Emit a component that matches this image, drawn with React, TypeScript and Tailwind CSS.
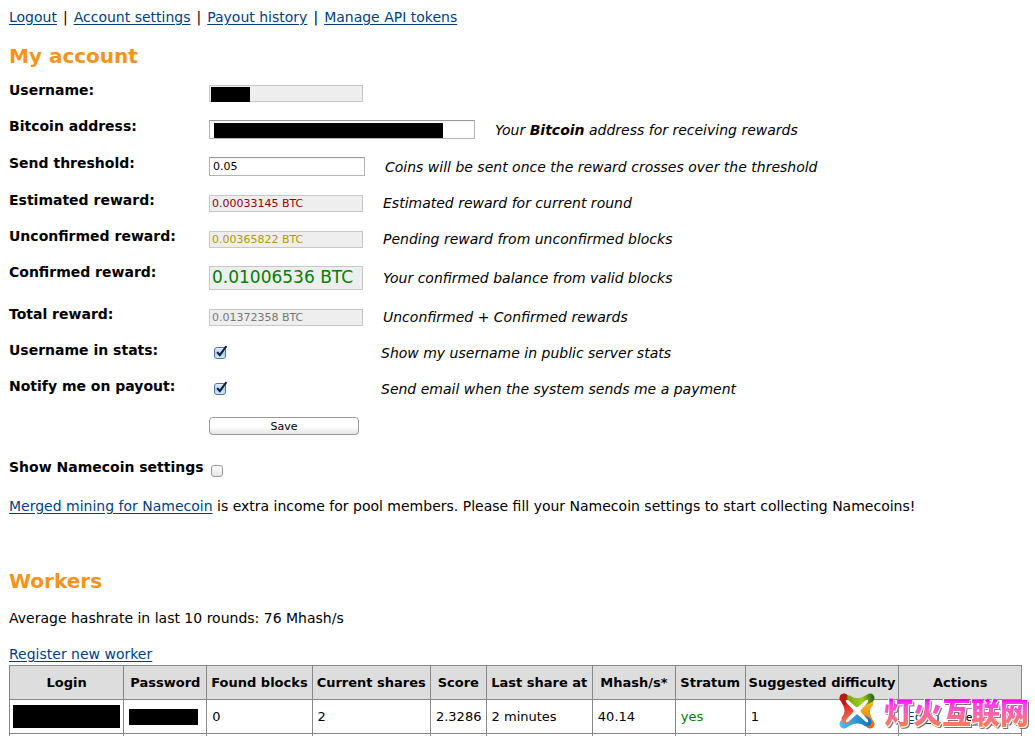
import type { ReactNode } from "react"

const linkClass = "text-[#003f7f] underline underline-offset-2"

const navLinks = ["Logout", "Account settings", "Payout history", "Manage API tokens"]

interface RowProps {
  id: string
  label: string
  note: ReactNode
  children: ReactNode
}

function Row({ id, label, note, children }: RowProps) {
  return (
    <div className="flex">
      <label htmlFor={id} className="w-50 shrink-0 font-bold leading-[18px]">
        {label}
      </label>
      <div className="flex min-h-9 items-center gap-5 pt-[3px] pb-[15px]">
        {children}
        <p className="whitespace-nowrap italic leading-[18px]">{note}</p>
      </div>
    </div>
  )
}

function ReadOnlyField({ id, value, className }: { id: string; value: string; className: string }) {
  return (
    <input
      id={id}
      readOnly
      value={value}
      className={`w-[154px] border border-[#c8c8c8] bg-[#eeeeee] px-[2px] ${className}`}
    />
  )
}

function Tick({ id }: { id: string }) {
  return (
    <span className="relative flex w-[152px] pl-[5px]">
      <input
        id={id}
        type="checkbox"
        defaultChecked
        className="peer h-3 w-3 appearance-none rounded-[3px] border border-[#5a6ea8] bg-linear-to-b from-[#e4f1fc] via-[#a8cff4] to-[#c8f0ff]"
      />
      <svg
        viewBox="0 0 14 14"
        className="pointer-events-none absolute -top-[2px] left-[5px] hidden h-[14px] w-[14px] peer-checked:block"
      >
        <path d="M3.2 7.2 L5.8 10.2 L12.4 1.2" fill="none" stroke="#101a35" strokeWidth="2" />
      </svg>
    </span>
  )
}

const columns = [
  { title: "Login", width: "w-[11.3%]" },
  { title: "Password", width: "w-[8.2%]" },
  { title: "Found blocks", width: "w-[10.4%]" },
  { title: "Current shares", width: "w-[11.7%]" },
  { title: "Score", width: "w-[5.5%]" },
  { title: "Last share at", width: "w-[10.5%]" },
  { title: "Mhash/s*", width: "w-[8.2%]" },
  { title: "Stratum", width: "w-[6.9%]" },
  { title: "Suggested difficulty", width: "w-[15.2%]" },
  { title: "Actions", width: "w-[12.1%]" },
]

const cell = "border border-[#888888]"

function WorkersTable() {
  return (
    <table className="w-full table-fixed border-collapse whitespace-nowrap text-[13px]">
      <thead>
        <tr className="h-[34px] bg-[#dddddd]">
          {columns.map((column) => (
            <th key={column.title} className={`${cell} ${column.width}`}>
              <span className="flex justify-center">{column.title}</span>
            </th>
          ))}
        </tr>
      </thead>
      <tbody>
        <tr className="h-[34px]">
          <td className={`${cell} px-[3px]`}>
            <div className="h-[23px] bg-black" />
          </td>
          <td className={`${cell} px-[5px]`}>
            <div className="mr-[3px] h-4 bg-black" />
          </td>
          <td className={`${cell} px-[5px]`}>0</td>
          <td className={`${cell} px-[5px]`}>2</td>
          <td className={`${cell} px-[5px]`}>2.3286</td>
          <td className={`${cell} px-[5px]`}>2 minutes</td>
          <td className={`${cell} px-[5px]`}>40.14</td>
          <td className={`${cell} px-[5px] text-[#008000]`}>yes</td>
          <td className={`${cell} px-[5px]`}>1</td>
          <td className={`${cell} px-[7px]`}>
            <a href="#edit" className={linkClass}>Edit</a> |{" "}
            <button className="ml-1 h-[18px] rounded-[4px] border border-[#999999] bg-linear-to-b from-white to-[#e8e8e8] px-2 align-middle text-[11px] leading-none">
              Delete
            </button>
          </td>
        </tr>
        <tr className="h-[34px]">
          {columns.map((column) => (
            <td key={column.title} className={cell} />
          ))}
        </tr>
      </tbody>
    </table>
  )
}

function Watermark() {
  return (
    <div className="pointer-events-none absolute right-[6px] bottom-[7px] flex items-center gap-[9px]">
      <svg viewBox="0 0 36 36" className="h-9 w-9" fill="none" strokeLinecap="round">
        <defs>
          <linearGradient id="red" gradientUnits="userSpaceOnUse" x1="4" y1="2" x2="10" y2="26">
            <stop offset="0" stopColor="#9c0a0c" />
            <stop offset="0.4" stopColor="#e0201c" />
            <stop offset="1" stopColor="#f2704c" />
          </linearGradient>
          <linearGradient id="green" gradientUnits="userSpaceOnUse" x1="6" y1="8" x2="34" y2="5">
            <stop offset="0" stopColor="#6fa018" />
            <stop offset="0.6" stopColor="#a2cc20" />
            <stop offset="1" stopColor="#2f6e12" />
          </linearGradient>
          <linearGradient id="orange" gradientUnits="userSpaceOnUse" x1="28" y1="8" x2="32" y2="34">
            <stop offset="0" stopColor="#f0c428" />
            <stop offset="1" stopColor="#ee6208" />
          </linearGradient>
          <linearGradient id="blue" gradientUnits="userSpaceOnUse" x1="2" y1="30" x2="30" y2="30">
            <stop offset="0" stopColor="#55bcec" />
            <stop offset="1" stopColor="#1474bd" />
          </linearGradient>
        </defs>
        <path d="M31 31 Q22 18 30 10" stroke="url(#orange)" strokeWidth="9" />
        <path d="M5 31 Q18 22 28 29" stroke="url(#blue)" strokeWidth="9" />
        <path d="M5 5 Q14 18 7 26" stroke="url(#red)" strokeWidth="9" />
        <path d="M10 7 Q18 13 31 5" stroke="url(#green)" strokeWidth="9" />
        <path d="M1 6 Q1 1 5 1 Q7 1 8 3 L9 10 L5 12 Z" fill="#c01614" />
        <path d="M7 9 Q6 6 9 7 L18 15 L27 7 Q30 6 29 9 L21 18 L29 27 Q30 30 27 29 L18 21 L9 29 Q6 30 7 27 L15 18 Z" fill="white" />
      </svg>
      <span className="bg-linear-to-b from-[#ff00ff] from-20% to-[#ff7a50] to-90% bg-clip-text font-['Noto_Sans_CJK_SC',sans-serif] text-[29px] leading-9 font-black text-transparent [filter:drop-shadow(1px_1px_0_white)_drop-shadow(-1px_0_0_white)_drop-shadow(1px_1px_0_#777777)]">
        灯火互联网
      </span>
    </div>
  )
}

export default function App() {
  return (
    <div className="relative h-screen overflow-hidden bg-white pr-[13px] pl-[9px] font-['DejaVu_Sans',sans-serif] text-[14px] text-black">
      <nav className="flex gap-[6px] pt-2 leading-[18px]">
        {navLinks.map((text, index) => (
          <span key={text} className="flex gap-[6px]">
            {index > 0 && <span>|</span>}
            <a href="#nav" className={linkClass}>{text}</a>
          </span>
        ))}
      </nav>

      <h1 className="mt-4 text-[20px] leading-7 font-bold text-[#f7931a]">My account</h1>

      <form className="mt-[11px]" onSubmit={(event) => event.preventDefault()}>
        <Row id="username" label="Username:" note="">
          <span className="relative flex">
            <ReadOnlyField id="username" value="" className="h-[17px]" />
            <span className="absolute top-[2px] left-[2px] h-[15px] w-[39px] bg-black" />
          </span>
        </Row>
        <Row
          id="address"
          label="Bitcoin address:"
          note={<>Your <b>Bitcoin</b> address for receiving rewards</>}
        >
          <span className="relative flex">
            <input id="address" className="h-[19px] w-[266px] border border-[#b4b4b4] border-t-[#999999] px-[3px] text-[11px] inset-shadow-xs" />
            <span className="absolute top-[3px] left-[5px] h-[15px] w-[229px] bg-black" />
          </span>
        </Row>
        <Row id="threshold" label="Send threshold:" note="Coins will be sent once the reward crosses over the threshold">
          <input
            id="threshold"
            defaultValue="0.05"
            className="h-[19px] w-[156px] border border-[#b4b4b4] border-t-[#999999] px-[3px] text-[11px] inset-shadow-xs"
          />
        </Row>
        <Row id="estimated" label="Estimated reward:" note="Estimated reward for current round">
          <ReadOnlyField id="estimated" value="0.00033145 BTC" className="h-[17px] text-[11px] text-[#990000]" />
        </Row>
        <Row id="unconfirmed" label="Unconfirmed reward:" note="Pending reward from unconfirmed blocks">
          <ReadOnlyField id="unconfirmed" value="0.00365822 BTC" className="h-[17px] text-[11px] text-[#b09a00]" />
        </Row>
        <Row id="confirmed" label="Confirmed reward:" note="Your confirmed balance from valid blocks">
          <ReadOnlyField id="confirmed" value="0.01006536 BTC" className="h-6 text-[17px] text-[#008000]" />
        </Row>
        <Row id="total" label="Total reward:" note="Unconfirmed + Confirmed rewards">
          <ReadOnlyField id="total" value="0.01372358 BTC" className="h-[17px] text-[11px] text-[#777777]" />
        </Row>
        <Row id="stats" label="Username in stats:" note="Show my username in public server stats">
          <Tick id="stats" />
        </Row>
        <Row id="notify" label="Notify me on payout:" note="Send email when the system sends me a payment">
          <Tick id="notify" />
        </Row>
        <div className="pt-1 pl-50">
          <button className="block h-[18px] w-[150px] rounded-[4px] border border-[#999999] bg-linear-to-b from-white from-50% to-[#e6e6e6] text-[11px] leading-none">
            Save
          </button>
        </div>
        <div className="mt-[23px] flex gap-[7px]">
          <label htmlFor="namecoin" className="font-bold leading-[18px]">Show Namecoin settings</label>
          <input
            id="namecoin"
            type="checkbox"
            className="mt-[7px] h-3 w-3 appearance-none rounded-[3px] border border-[#999999] bg-linear-to-b from-white to-[#e6e6e6]"
          />
        </div>
      </form>

      <p className="mt-5 leading-[18px]">
        <a href="#namecoin-info" className={linkClass}>Merged mining for Namecoin</a> is extra income for pool
        members. Please fill your Namecoin settings to start collecting Namecoins!
      </p>

      <h1 className="mt-[52px] text-[20px] leading-7 font-bold text-[#f7931a]">Workers</h1>
      <p className="mt-[14px] leading-[18px]">Average hashrate in last 10 rounds: 76 Mhash/s</p>
      <p className="mt-[18px] mb-[2px] leading-[18px]">
        <a href="#register" className={linkClass}>Register new worker</a>
      </p>
      <WorkersTable />
      <Watermark />
    </div>
  )
}
